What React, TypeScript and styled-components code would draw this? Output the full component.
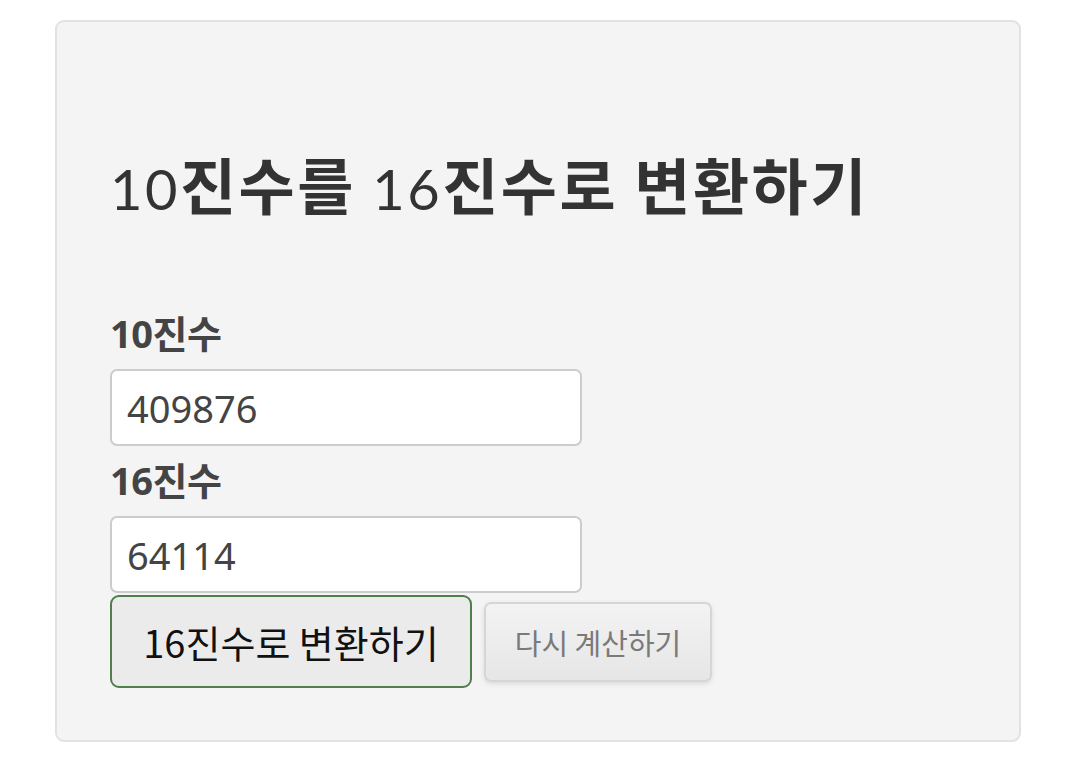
import React from "react";
import styled, { createGlobalStyle } from "styled-components";

const Global = createGlobalStyle`
  html, body { margin: 0; padding: 0; background: #ffffff; }
  body { font-family: "Noto Sans", "Noto Sans CJK KR", sans-serif; }
`;

const Page = styled.div`
  padding: 20px 58px 0 55px;
`;

const Card = styled.section`
  box-sizing: border-box;
  width: 966px;
  height: 722px;
  background: #f4f4f4;
  border: 2px solid #e2e2e2;
  border-radius: 9px;
  padding: 128px 52px 0 53px;
  display: flex;
  flex-direction: column;
  align-items: flex-start;
`;

const Title = styled.h1`
  margin: 0;
  height: 68px;
  font-family: "Noto Sans CJK KR", sans-serif;
  font-weight: 700;
  font-size: 61px;
  line-height: 68px;
  letter-spacing: 2.5px;
  color: #333333;
  white-space: nowrap;
`;

const Num = styled.span`
  font-family: "Lato", "Noto Sans", sans-serif;
  font-weight: 400;
  font-size: 56px;
  line-height: 1;
  letter-spacing: 2.5px;
`;

const Label = styled.label<{ $first?: boolean }>`
  display: block;
  margin: ${(p) => (p.$first ? "95px" : "14px")} 0 16px;
  font-family: "Noto Sans", "Noto Sans CJK KR", sans-serif;
  font-weight: 700;
  font-size: 38px;
  line-height: 40px;
  color: #444444;
  letter-spacing: -0.5px;
`;

const Input = styled.input`
  box-sizing: border-box;
  width: 472px;
  height: 77px;
  margin: 0;
  padding: 0 15px;
  background: #ffffff;
  border: 2px solid #cccccc;
  border-radius: 7px;
  font-family: "Noto Sans", sans-serif;
  font-size: 38px;
  color: #444444;
  outline: none;
`;

const Actions = styled.div`
  display: flex;
  align-items: center;
  gap: 12px;
  margin-top: 2px;
`;

const PrimaryButton = styled.button`
  box-sizing: border-box;
  width: 362px;
  height: 93px;
  padding: 0;
  background: #ebebeb;
  border: 2px solid #4f7f4a;
  border-radius: 9px;
  font-family: "Noto Sans CJK KR", sans-serif;
  font-weight: 400;
  font-size: 38px;
  color: #111111;
  cursor: pointer;
`;

const SecondaryButton = styled.button`
  box-sizing: border-box;
  width: 228px;
  height: 80px;
  padding: 0;
  background: linear-gradient(#f3f3f3, #e6e6e6);
  border: 2px solid #d6d6d6;
  border-radius: 7px;
  box-shadow: 0 2px 5px rgba(0, 0, 0, 0.1);
  font-family: "Noto Sans CJK KR", sans-serif;
  font-weight: 400;
  font-size: 29px;
  color: #7a7a7a;
  cursor: pointer;
`;

export default function App() {
  return (
    <>
      <Global />
      <Page>
        <Card>
          <Title>
            <Num>10</Num>진수를 <Num>16</Num>진수로 변환하기
          </Title>
          <Label $first htmlFor="dec">10진수</Label>
          <Input id="dec" defaultValue="409876" />
          <Label htmlFor="hex">16진수</Label>
          <Input id="hex" defaultValue="64114" />
          <Actions>
            <PrimaryButton>16진수로 변환하기</PrimaryButton>
            <SecondaryButton>다시 계산하기</SecondaryButton>
          </Actions>
        </Card>
      </Page>
    </>
  );
}
